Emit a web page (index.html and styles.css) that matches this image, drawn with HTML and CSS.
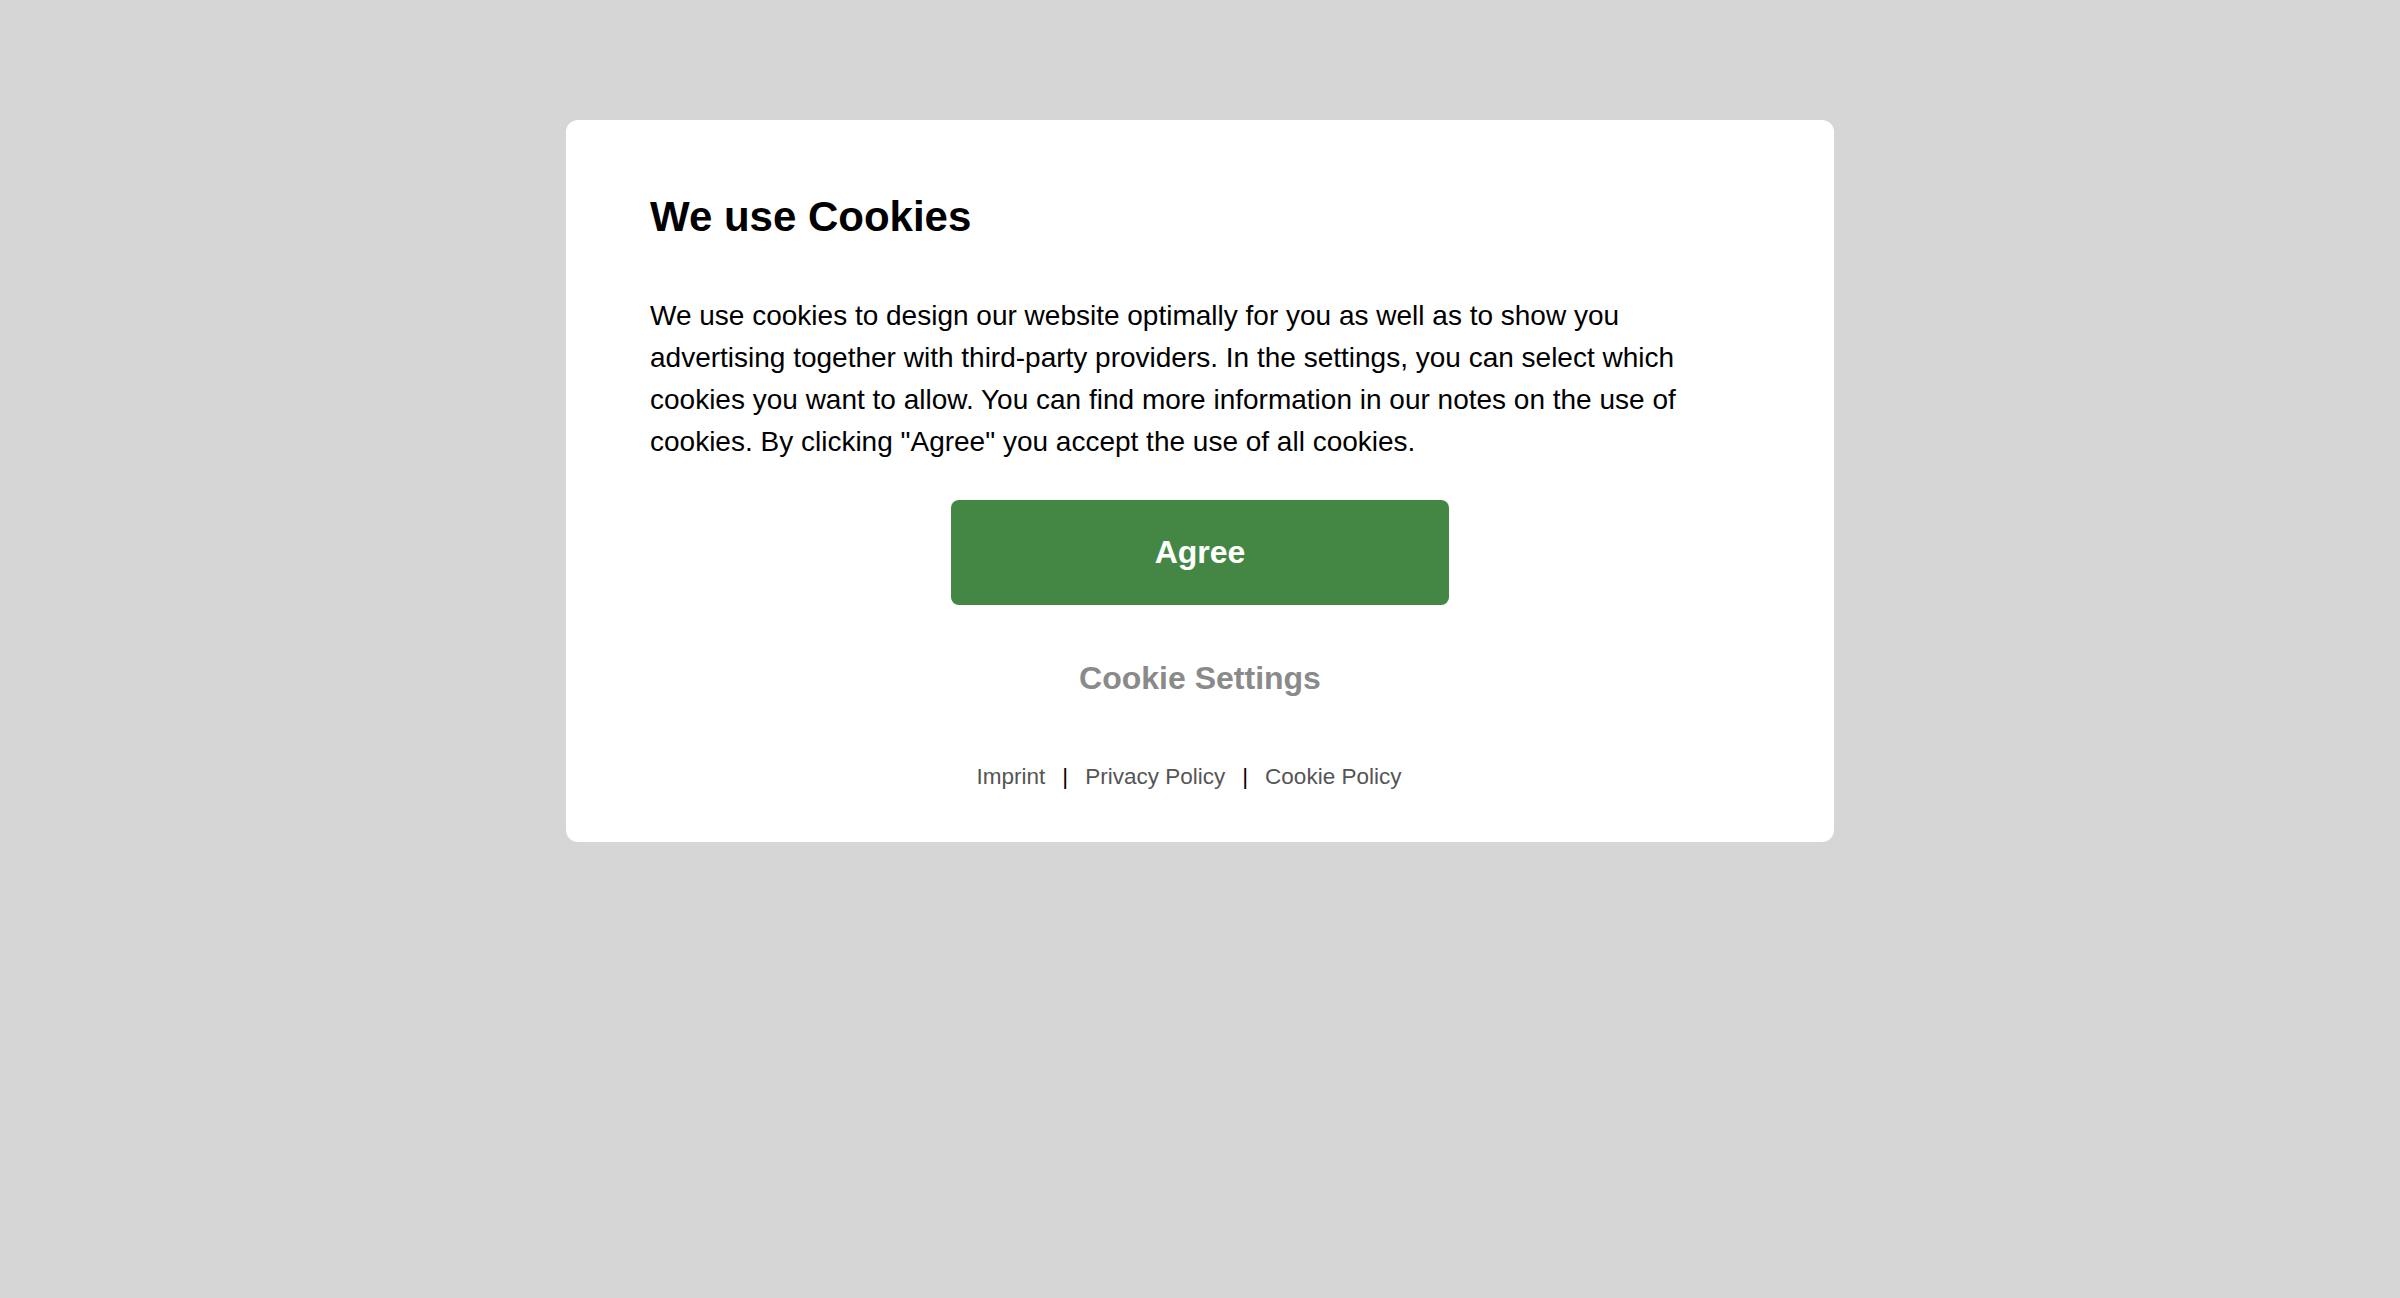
FILE: index.html
```html
<!DOCTYPE html>
<html lang="en">
<head>
<meta charset="utf-8">
<title>We use Cookies</title>
<link rel="stylesheet" href="styles.css">
</head>
<body>
<div class="overlay">
  <div class="card">
    <h1 class="title">We use Cookies</h1>
    <p class="text">We use cookies to design our website optimally for you as well as to show you advertising together with third-party providers. In the settings, you can select which cookies you want to allow. You can find more information in our notes on the use of cookies. By clicking "Agree" you accept the use of all cookies.</p>
    <div class="actions">
      <button class="agree" type="button">Agree</button>
      <a class="settings" href="#">Cookie Settings</a>
    </div>
    <nav class="links">
      <a href="#">Imprint</a><span class="sep">|</span><a href="#">Privacy Policy</a><span class="sep">|</span><a href="#">Cookie Policy</a>
    </nav>
  </div>
</div>
</body>
</html>
```
FILE: styles.css
```css
html, body {
  margin: 0;
  padding: 0;
  height: 100%;
}
body {
  background: #d6d6d6;
  font-family: "Liberation Sans", Arial, sans-serif;
  color: #000;
}
.overlay {
  padding-top: 120px;
  display: flex;
  justify-content: center;
}
.card {
  width: 1268px;
  box-sizing: border-box;
  background: #fff;
  border-radius: 12px;
  padding: 73px 84px 53px;
}
.title {
  margin: 0;
  font-size: 42px;
  line-height: 48px;
  font-weight: 700;
}
.text {
  margin: 54px 0 0;
  max-width: 1100px;
  font-size: 28px;
  line-height: 42px;
}
.actions {
  display: flex;
  flex-direction: column;
  align-items: center;
  margin-top: 37px;
}
.agree {
  width: 498px;
  height: 105px;
  border: 0;
  border-radius: 8px;
  background: #448744;
  color: #fff;
  font-family: inherit;
  font-size: 32px;
  font-weight: 700;
  cursor: pointer;
}
.settings {
  margin-top: 55px;
  font-size: 32px;
  line-height: 37px;
  font-weight: 700;
  color: #8a8a8a;
  text-decoration: none;
}
.links {
  margin-top: 67px;
  padding-right: 22px;
  display: flex;
  justify-content: center;
  font-size: 22.5px;
  line-height: 25px;
}
.links a {
  color: #555;
  text-decoration: none;
}
.sep {
  margin: 0 17px;
  color: #000;
}
```
